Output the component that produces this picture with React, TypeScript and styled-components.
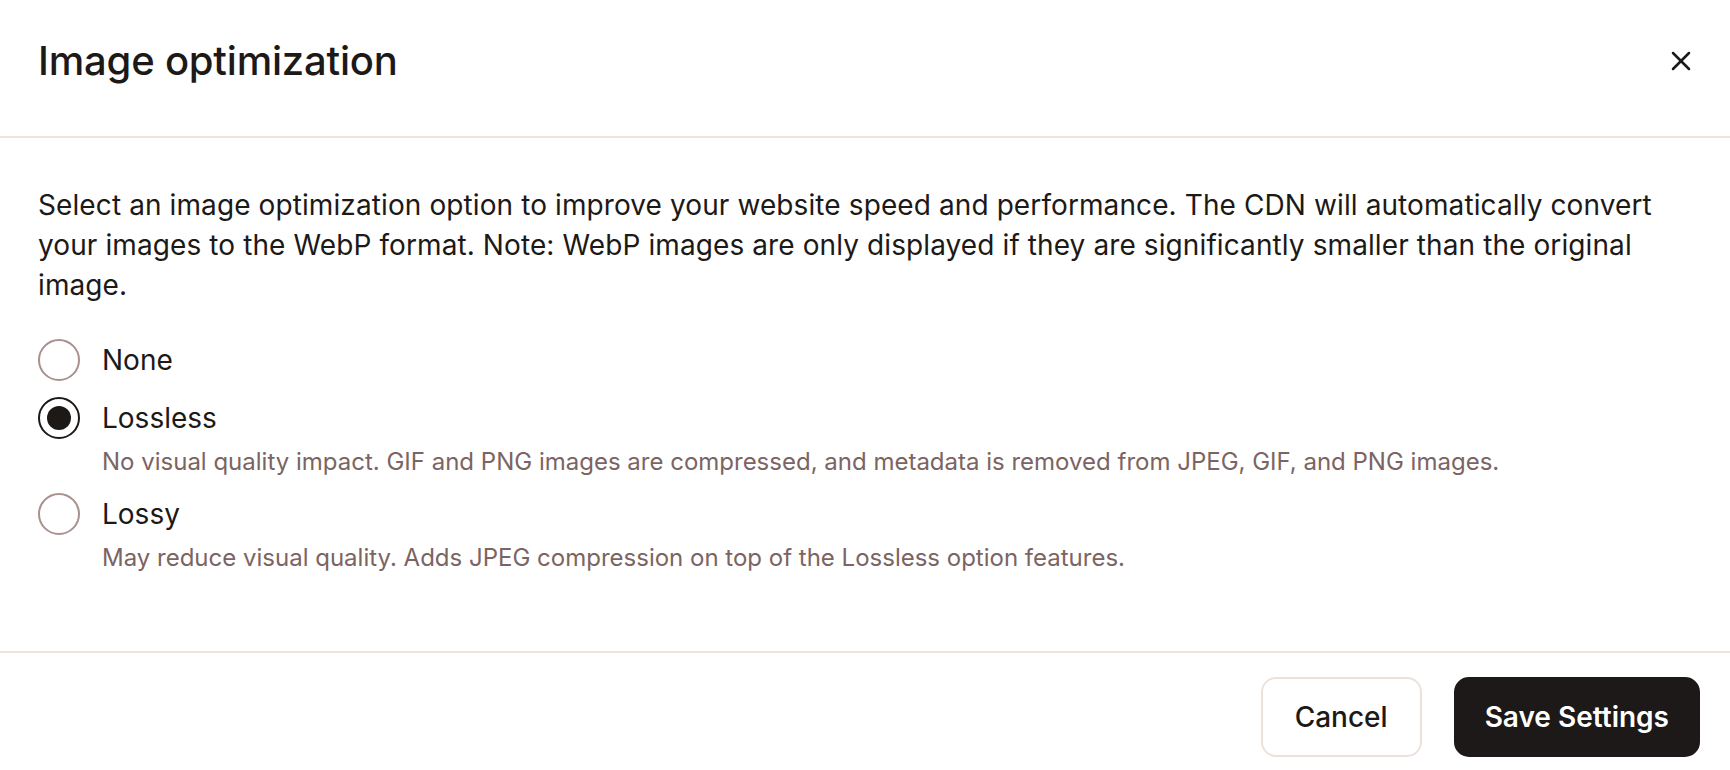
import React, { useState } from "react";
import styled, { createGlobalStyle } from "styled-components";
import { X } from "lucide-react";

const GlobalStyle = createGlobalStyle`
  html, body {
    margin: 0;
    padding: 0;
    background: #ffffff;
  }
  body {
    font-family: Inter, "Noto Sans", "Liberation Sans", sans-serif;
    color: #1c1917;
    -webkit-font-smoothing: antialiased;
  }
`;

const Dialog = styled.div`
  width: 100%;
  min-height: 770px;
  display: flex;
  flex-direction: column;
  background: #fff;
`;

const Header = styled.header`
  display: flex;
  align-items: flex-start;
  justify-content: space-between;
  height: 138px;
  box-sizing: border-box;
  padding: 36px 24px 0 38px;
  border-bottom: 2px solid #ebe3dd;
`;

const Title = styled.h1`
  margin: 0;
  font-size: 40px;
  line-height: 50px;
  font-weight: 500;
  letter-spacing: -0.2px;
  color: #1c1917;
`;

const CloseButton = styled.button`
  display: flex;
  align-items: center;
  justify-content: center;
  width: 50px;
  height: 50px;
  padding: 0;
  border: none;
  background: transparent;
  color: #1c1917;
  cursor: pointer;
`;

const Body = styled.div`
  padding: 47px 38px 0 38px;
  border-bottom: 2px solid #ebe3dd;
  height: 515px;
  box-sizing: border-box;
`;

const Intro = styled.p`
  margin: 0 0 33px 0;
  font-size: 28px;
  line-height: 40px;
  letter-spacing: 0.1px;
  font-weight: 400;
  color: #1c1917;
`;

const Options = styled.div`
  display: flex;
  flex-direction: column;
  gap: 14px;
`;

const Option = styled.label`
  display: grid;
  grid-template-columns: 42px 1fr;
  column-gap: 22px;
  cursor: pointer;
`;

const Radio = styled.span<{ $checked: boolean }>`
  width: 42px;
  height: 42px;
  margin-top: 1px;
  box-sizing: border-box;
  border-radius: 50%;
  border: ${(p) => (p.$checked ? "2px solid #1c1917" : "2px solid #a8918e")};
  display: flex;
  align-items: center;
  justify-content: center;

  &::after {
    content: "";
    display: ${(p) => (p.$checked ? "block" : "none")};
    width: 24px;
    height: 24px;
    border-radius: 50%;
    background: #1c1917;
  }
`;

const OptionLabel = styled.span`
  font-size: 28px;
  line-height: 44px;
  color: #1c1917;
`;

const OptionHint = styled.span`
  grid-column: 2;
  margin-top: 6px;
  font-size: 24px;
  line-height: 32px;
  color: #7b6462;
`;

const Footer = styled.footer`
  display: flex;
  justify-content: flex-end;
  gap: 32px;
  padding: 24px 30px 0 30px;
`;

const Button = styled.button<{ $primary?: boolean }>`
  height: 80px;
  padding: 0 ${(p) => (p.$primary ? "29px" : "32px")};
  border-radius: 15px;
  font-family: Inter, "Noto Sans", "Liberation Sans", sans-serif;
  font-size: 28px;
  font-weight: ${(p) => (p.$primary ? 600 : 500)};
  cursor: pointer;
  border: ${(p) => (p.$primary ? "2px solid #1c1918" : "2px solid #ede2db")};
  background: ${(p) => (p.$primary ? "#1c1918" : "#ffffff")};
  color: ${(p) => (p.$primary ? "#ffffff" : "#1c1917")};
`;

const options = [
  { key: "none", label: "None", hint: "" },
  {
    key: "lossless",
    label: "Lossless",
    hint: "No visual quality impact. GIF and PNG images are compressed, and metadata is removed from JPEG, GIF, and PNG images.",
  },
  {
    key: "lossy",
    label: "Lossy",
    hint: "May reduce visual quality. Adds JPEG compression on top of the Lossless option features.",
  },
];

const App: React.FC = () => {
  const [value, setValue] = useState("lossless");

  return (
    <>
      <GlobalStyle />
      <Dialog>
        <Header>
          <Title>Image optimization</Title>
          <CloseButton aria-label="Close">
            <X size={32} strokeWidth={1.9} />
          </CloseButton>
        </Header>

        <Body>
          <Intro>
            Select an image optimization option to improve your website speed and performance. The CDN will
            automatically convert your images to the WebP format. Note: WebP images are only displayed if they are
            significantly smaller than the original image.
          </Intro>

          <Options>
            {options.map((item) => (
              <Option key={item.key} onClick={() => setValue(item.key)}>
                <Radio $checked={value === item.key} />
                <OptionLabel>{item.label}</OptionLabel>
                {item.hint && <OptionHint>{item.hint}</OptionHint>}
              </Option>
            ))}
          </Options>
        </Body>

        <Footer>
          <Button>Cancel</Button>
          <Button $primary>Save Settings</Button>
        </Footer>
      </Dialog>
    </>
  );
};

export default App;
